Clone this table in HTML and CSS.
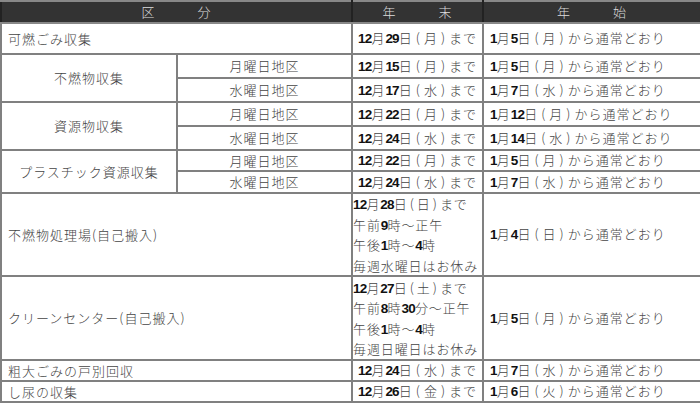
FILE: index.html
```html
<!DOCTYPE html>
<html lang="ja">
<head>
<meta charset="utf-8">
<title>年末年始のごみ収集</title>
<link rel="stylesheet" href="styles.css">
</head>
<body>
<table class="sched">
  <colgroup><col class="c1"><col class="c2"><col class="c3"><col class="c4"></colgroup>
  <thead>
    <tr class="h-head"><th colspan="2">区　　　分</th><th>年　　　末</th><th>年　　　始</th></tr>
  </thead>
  <tbody>
    <tr class="h31"><td colspan="2" class="lbl">可燃ごみ収集</td><td class="end"><b>12</b>月<b>29</b>日<span class="p">(月)</span>まで</td><td class="start"><b>1</b>月<b>5</b>日<span class="p">(月)</span>から通常どおり</td></tr>

    <tr class="h24 top"><td rowspan="2" class="grp">不燃物収集</td><td class="area">月曜日地区</td><td class="end"><b>12</b>月<b>15</b>日<span class="p">(月)</span>まで</td><td class="start"><b>1</b>月<b>5</b>日<span class="p">(月)</span>から通常どおり</td></tr>
    <tr class="h24 sub"><td class="area">水曜日地区</td><td class="end"><b>12</b>月<b>17</b>日<span class="p">(水)</span>まで</td><td class="start"><b>1</b>月<b>7</b>日<span class="p">(水)</span>から通常どおり</td></tr>

    <tr class="h24 top"><td rowspan="2" class="grp">資源物収集</td><td class="area">月曜日地区</td><td class="end"><b>12</b>月<b>22</b>日<span class="p">(月)</span>まで</td><td class="start"><b>1</b>月<b>12</b>日<span class="p">(月)</span>から通常どおり</td></tr>
    <tr class="h24 sub"><td class="area">水曜日地区</td><td class="end"><b>12</b>月<b>24</b>日<span class="p">(水)</span>まで</td><td class="start"><b>1</b>月<b>14</b>日<span class="p">(水)</span>から通常どおり</td></tr>

    <tr class="h21 top"><td rowspan="2" class="grp">プラスチック資源収集</td><td class="area">月曜日地区</td><td class="end"><b>12</b>月<b>22</b>日<span class="p">(月)</span>まで</td><td class="start"><b>1</b>月<b>5</b>日<span class="p">(月)</span>から通常どおり</td></tr>
    <tr class="h22 sub"><td class="area">水曜日地区</td><td class="end"><b>12</b>月<b>24</b>日<span class="p">(水)</span>まで</td><td class="start"><b>1</b>月<b>7</b>日<span class="p">(水)</span>から通常どおり</td></tr>

    <tr class="h83 top"><td colspan="2" class="lbl">不燃物処理場(自己搬入)</td><td class="multi"><b>12</b>月<b>28</b>日<span class="p">(日)</span>まで<br>午前<b>9</b>時〜正午<br>午後<b>1</b>時〜<b>4</b>時<br>毎週水曜日はお休み</td><td class="start"><b>1</b>月<b>4</b>日<span class="p">(日)</span>から通常どおり</td></tr>

    <tr class="h85 top"><td colspan="2" class="lbl">クリーンセンター(自己搬入)</td><td class="multi"><b>12</b>月<b>27</b>日<span class="p">(土)</span>まで<br>午前<b>8</b>時<b>30</b>分〜正午<br>午後<b>1</b>時〜<b>4</b>時<br>毎週日曜日はお休み</td><td class="start"><b>1</b>月<b>5</b>日<span class="p">(月)</span>から通常どおり</td></tr>

    <tr class="h21 top"><td colspan="2" class="lbl">粗大ごみの戸別回収</td><td class="end"><b>12</b>月<b>24</b>日<span class="p">(水)</span>まで</td><td class="start"><b>1</b>月<b>7</b>日<span class="p">(水)</span>から通常どおり</td></tr>
    <tr class="h21 top"><td colspan="2" class="lbl">し尿の収集</td><td class="end"><b>12</b>月<b>26</b>日<span class="p">(金)</span>まで</td><td class="start"><b>1</b>月<b>6</b>日<span class="p">(火)</span>から通常どおり</td></tr>
  </tbody>
</table>
</body>
</html>
```
FILE: styles.css
```css
body {
  margin: 0;
  background: #fff;
  font-family: "Noto Sans CJK JP", sans-serif;
  font-size: 13px;
  font-weight: 300;
  color: #454545;
}

.sched {
  border-collapse: collapse;
  table-layout: fixed;
  width: 700px;
}

.c1 { width: 176px; }
.c2 { width: 175px; }
.c3 { width: 131px; }
.c4 { width: 218px; }

.sched th,
.sched td {
  border: 2px solid #808080;
  padding: 0;
  line-height: 16px;
  letter-spacing: 1px;
  white-space: nowrap;
  vertical-align: middle;
}

.sched th {
  background: #333;
  color: #ddd;
  font-weight: 300;
  text-align: center;
  border-color: #888 #222;
}

.sched b {
  font-family: "Liberation Sans", sans-serif;
  font-weight: bold;
  font-size: 13.5px;
  letter-spacing: -0.8px;
  color: #111;
}

.sched .p {
  margin-left: 3px;
  letter-spacing: 4px;
}

.sched .lbl { padding-left: 6px; text-align: left; }
.grp { text-align: center; }
.area { text-align: center; }
.end { text-align: center; }
.sched .start { padding-left: 6px; text-align: left; }
.sched .multi { text-align: left; line-height: 19.5px; letter-spacing: 0.9px; }
.multi .p { margin-left: 2px; letter-spacing: 3px; }

.sub td { border-top-color: #a8a8a8; }
.top td { border-top-color: #555; }

.h-head { height: 22px; }
.h31 { height: 31px; }
.h24 { height: 24px; }
.h22 { height: 22px; }
.h21 { height: 21px; }
.h83 { height: 81px; }
.h85 { height: 84px; }
```
